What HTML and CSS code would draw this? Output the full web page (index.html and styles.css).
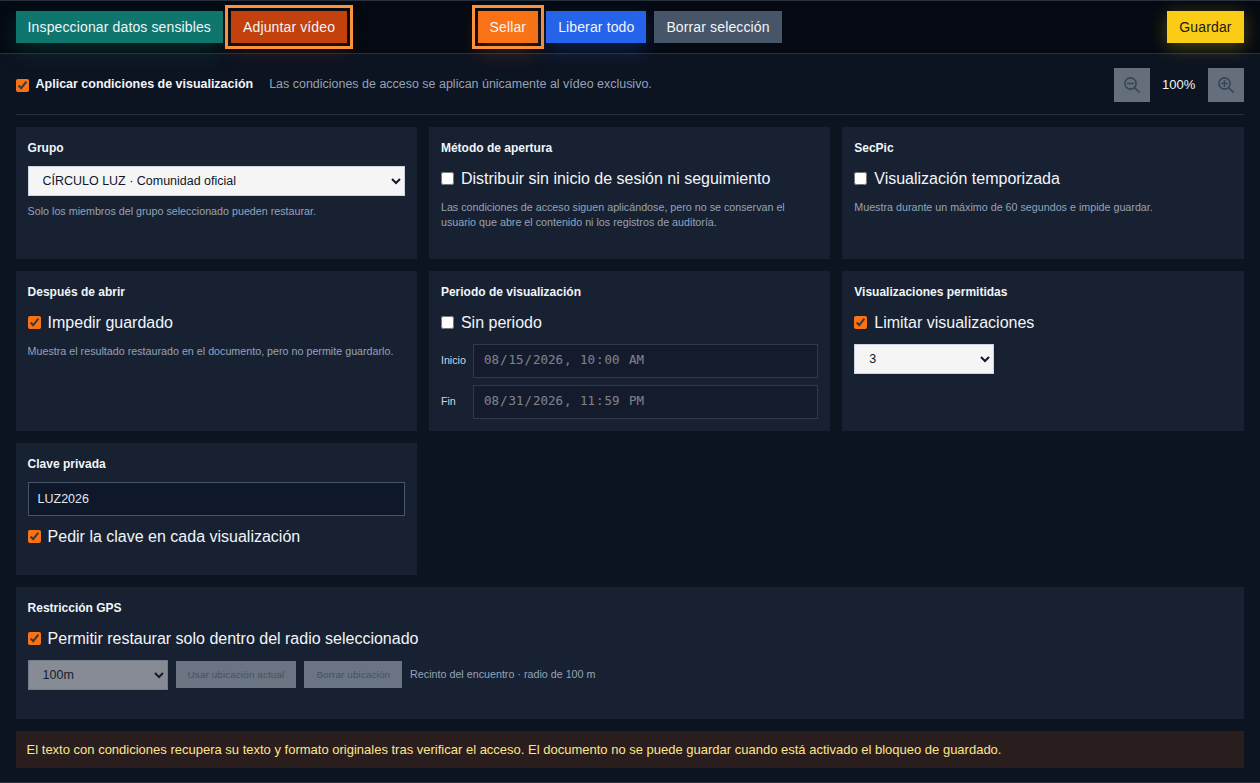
FILE: index.html
```html
<!DOCTYPE html>
<html lang="es">
	<head>
		<meta charset="utf-8" />
		<title>Condiciones de visualización</title>
		<link rel="stylesheet" href="styles.css">
	</head>
	<body>
		<header class="toolbar">
			<div class="tools">
				<button class="btn btn-inspect">Inspeccionar datos sensibles</button>
				<button class="btn btn-video marked">Adjuntar vídeo</button>
			</div>
			<div class="tools">
				<button class="btn btn-seal marked">Sellar</button>
				<button class="btn btn-release">Liberar todo</button>
				<button class="btn btn-clear">Borrar selección</button>
			</div>
			<div class="tools tools-end">
				<button class="btn btn-save">Guardar</button>
			</div>
		</header>
		<main class="panel">
			<div class="panel-head">
				<label class="apply"><input type="checkbox" checked><span>Aplicar condiciones de visualización</span></label>
				<span class="head-note">Las condiciones de acceso se aplican únicamente al vídeo exclusivo.</span>
				<div class="zoom">
					<button class="zoom-btn" disabled>
						<svg width="16" height="16" viewBox="0 0 16 16"><circle cx="6.5" cy="6.5" r="5.6"/><path d="M10.6 10.6L15.3 15.3M3.8 6.5h5.4"/></svg>
					</button>
					<span class="zoom-value">100%</span>
					<button class="zoom-btn" disabled>
						<svg width="16" height="16" viewBox="0 0 16 16"><circle cx="6.5" cy="6.5" r="5.6"/><path d="M10.6 10.6L15.3 15.3M3.8 6.5h5.4M6.5 3.8v5.4"/></svg>
					</button>
				</div>
			</div>
			<div class="cards">
				<section class="card">
					<h3>Grupo</h3>
					<select class="select"><option>CÍRCULO LUZ · Comunidad oficial</option></select>
					<p class="note">Solo los miembros del grupo seleccionado pueden restaurar.</p>
				</section>
				<section class="card">
					<h3>Método de apertura</h3>
					<label class="check"><input type="checkbox"><span>Distribuir sin inicio de sesión ni seguimiento</span></label>
					<p class="note">Las condiciones de acceso siguen aplicándose, pero no se conservan el usuario que abre el contenido ni los registros de auditoría.</p>
				</section>
				<section class="card">
					<h3>SecPic</h3>
					<label class="check"><input type="checkbox"><span>Visualización temporizada</span></label>
					<p class="note">Muestra durante un máximo de 60 segundos e impide guardar.</p>
				</section>
				<section class="card">
					<h3>Después de abrir</h3>
					<label class="check"><input type="checkbox" checked><span>Impedir guardado</span></label>
					<p class="note">Muestra el resultado restaurado en el documento, pero no permite guardarlo.</p>
				</section>
				<section class="card">
					<h3>Periodo de visualización</h3>
					<label class="check"><input type="checkbox"><span>Sin periodo</span></label>
					<div class="period">
						<span>Inicio</span>
						<input class="field" type="datetime-local" value="2026-08-15T10:00" disabled>
						<span>Fin</span>
						<input class="field" type="datetime-local" value="2026-08-31T23:59" disabled>
					</div>
				</section>
				<section class="card">
					<h3>Visualizaciones permitidas</h3>
					<label class="check"><input type="checkbox" checked><span>Limitar visualizaciones</span></label>
					<select class="select select-short"><option>3</option></select>
				</section>
				<section class="card">
					<h3>Clave privada</h3>
					<input class="field" type="text" value="LUZ2026">
					<label class="check"><input type="checkbox" checked><span>Pedir la clave en cada visualización</span></label>
				</section>
				<section class="card card-wide">
					<h3>Restricción GPS</h3>
					<label class="check"><input type="checkbox" checked><span>Permitir restaurar solo dentro del radio seleccionado</span></label>
					<div class="gps">
						<select class="select select-short" disabled><option>100m</option></select>
						<button class="btn-small" disabled>Usar ubicación actual</button>
						<button class="btn-small" disabled>Borrar ubicación</button>
						<span class="gps-note">Recinto del encuentro · radio de 100 m</span>
					</div>
				</section>
			</div>
			<p class="warning">El texto con condiciones recupera su texto y formato originales tras verificar el acceso. El documento no se puede guardar cuando está activado el bloqueo de guardado.</p>
		</main>
	</body>
</html>
```
FILE: styles.css
```css
*{box-sizing: border-box;margin: 0;padding: 0;}
body{height: 783px;
	overflow: hidden;
	background-color: #0d1421;
	color: #f1f5f9;
	font-family: "Liberation Sans", Arial, sans-serif;
	font-size: 16px;
}
button, select, input{font-family: inherit;
	border-radius: 0;
}

/* barra superior */
.toolbar{display: grid;
	grid-template-columns: 1fr auto 1fr;
	height: 54px;
	padding: 10px 16.4px 10px 15.6px;
	background-color: #050a12;
	border-top: 1px solid #27303c;
	border-bottom: 1px solid #27303c;
}
.tools{display: flex;
	gap: 8px;
}
.tools-end{justify-content: flex-end;
}
.btn{height: 32px;
	padding: 0 12px;
	border: 0;
	color: #f1f5f9;
	font-size: 14px;
	letter-spacing: 0.13px;
	white-space: nowrap;
}
.btn-inspect{background-color: #0f766e;
	box-shadow: 0 8px 20px rgba(15,118,110,0.25);
}
.btn-video{background-color: #c2410c;
	box-shadow: 0 8px 20px rgba(194,65,12,0.2);
}
.btn-seal{background-color: #f97316;
	box-shadow: 0 8px 20px rgba(249,115,22,0.22);
}
.btn-release{background-color: #2563eb;
	box-shadow: 0 8px 20px rgba(37,99,235,0.25);
}
.btn-clear{background-color: #475569;
}
.btn-save{background-color: #facc15;
	color: #1c1917;
	box-shadow: 0 4px 18px rgba(250,204,21,0.3);
}
.marked{outline: 3px solid #fb923c;
	outline-offset: 3px;
}

/* cabecera del panel */
.panel{height: 729px;
	padding: 14px 16.4px 14px 15.6px;
	border-bottom: 1px solid #27303c;
}
.panel-head{display: flex;
	align-items: center;
	height: 47px;
	padding-bottom: 12px;
	border-bottom: 1px solid #27323f;
}
input[type="checkbox"]{width: 13px;
	height: 13px;
	flex: none;
	accent-color: #f97316;
}
.apply{display: flex;
	align-items: flex-start;
	gap: 7px;
	margin-right: 16px;
	margin-bottom: 2px;
	font-size: 12.48px;
	font-weight: bold;
	line-height: 14px;
}
.apply input{margin-top: 2px;
}
.head-note{color: #94a3b8;
	font-size: 12.48px;
	line-height: 14px;
	margin-bottom: 2px;
}
.zoom{display: flex;
	align-items: center;
	margin-left: auto;
}
.zoom-btn{display: grid;
	place-items: center;
	width: 36px;
	height: 34px;
	border: 0;
	background-color: #656f7c;
}
.zoom-btn svg{fill: none;
	stroke: #374357;
	stroke-width: 1.6;
	stroke-linecap: round;
}
.zoom-value{width: 58px;
	padding-bottom: 1px;
	text-align: center;
	font-size: 13px;
}

/* tarjetas */
.cards{display: grid;
	grid-template-columns: repeat(3, 1fr);
	grid-template-rows: 132px 160px 132px 132px;
	gap: 12px;
	margin-top: 12px;
}
.card{padding: 12px;
	background-color: #182132;
}
.card-wide{grid-column: 1 / -1;
}
.card h3{height: 17px;
	margin-bottom: 10px;
	font-size: 12px;
	line-height: 18px;
}
.check{display: flex;
	align-items: flex-start;
	gap: 7px;
	height: 24px;
	line-height: 26px;
}
.check input{margin-top: 6px;
}
.note{margin-top: 10px;
	color: #94a3b8;
	font-size: 10.72px;
	line-height: 15px;
}
.select{display: block;
	width: 100%;
	height: 30px;
	padding: 0 10px;
	border: 1px solid #cbd5e1;
	background-color: #f5f5f5;
	color: #0f172a;
	font-size: 12.48px;
}
.select + .note{margin-top: 8px;
}
.select-short{width: 140px;
}
.check + .select{margin-top: 10px;
}
.select:disabled{opacity: 0.5;
}
.field{display: block;
	width: 100%;
	height: 34px;
	padding: 0 9px;
	border: 1px solid #475569;
	background-color: #0f172a;
	color: #e2e8f0;
	font-size: 12.48px;
}
.field:disabled{padding-bottom: 3px;
	opacity: 0.5;
	color: #e2e2e2;
	font-family: "DejaVu Sans Mono", monospace;
}
.field + .check{margin-top: 8px;
}
.period{display: grid;
	grid-template-columns: 26px 1fr;
	align-items: center;
	gap: 7px 6px;
	margin-top: 10px;
	color: #cbd5e1;
	font-size: 10.72px;
}
.period span{padding-bottom: 2px;
}
.gps{display: flex;
	align-items: flex-start;
	gap: 8px;
	margin-top: 10px;
}
.btn-small{height: 27px;
	margin-top: 1px;
	padding: 0 12px;
	border: 0;
	background-color: #6b7482;
	color: #465265;
	font-size: 9.92px;
	letter-spacing: 0.01em;
}
.gps-note{color: #94a3b8;
	font-size: 10.72px;
	line-height: 28px;
}

.warning{height: 37px;
	margin-top: 12px;
	padding: 0 11px;
	background-color: #2a1d1e;
	color: #fde68a;
	font-size: 13px;
	line-height: 37px;
}
```
